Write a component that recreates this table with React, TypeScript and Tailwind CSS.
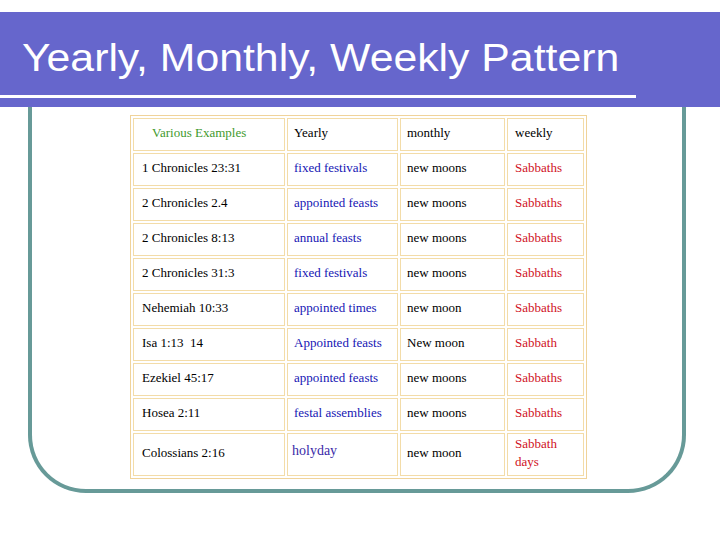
import React from "react";

type Row = { a: string; b: string; c: string; d: React.ReactNode };

const rows: Row[] = [
  { a: "1 Chronicles 23:31", b: "fixed festivals", c: "new moons", d: "Sabbaths" },
  { a: "2 Chronicles 2.4", b: "appointed feasts", c: "new moons", d: "Sabbaths" },
  { a: "2 Chronicles 8:13", b: "annual feasts", c: "new moons", d: "Sabbaths" },
  { a: "2 Chronicles 31:3", b: "fixed festivals", c: "new moons", d: "Sabbaths" },
  { a: "Nehemiah 10:33", b: "appointed times", c: "new moon", d: "Sabbaths" },
  { a: "Isa 1:13\u00a0 14", b: "Appointed feasts", c: "New moon", d: "Sabbath" },
  { a: "Ezekiel 45:17", b: "appointed feasts", c: "new moons", d: "Sabbaths" },
  { a: "Hosea 2:11", b: "festal assemblies", c: "new moons", d: "Sabbaths" },
];

const cell = "bg-white border border-[#f3dca8] flex items-center pb-[3px]";

export default function App() {
  return (
    <div className="w-[720px] h-[540px] bg-white overflow-hidden relative" style={{ fontFamily: '"Liberation Serif", serif' }}>
      <div className="mt-[12px] h-[95px] bg-[#6666cc] flex flex-col">
        <div className="h-[83px] pl-[22px] pt-[27px]">
          <div
            className="text-white text-[38px] leading-[38px] origin-left scale-x-[1.125] whitespace-nowrap"
            style={{ fontFamily: '"Liberation Sans", Arial, sans-serif' }}
          >
            Yearly, Monthly, Weekly Pattern
          </div>
        </div>
        <div className="w-[636px] h-[3px] bg-white" />
      </div>
      <div className="ml-[28px] w-[658px] h-[386px] border-4 border-t-0 border-[#679a98] rounded-b-[58px] pl-[98px] pt-[8px]">
        <div className="w-[457px] border border-[#f0d39a] p-[2px] grid grid-cols-[152px_111px_105px_77px] gap-[2px] text-[13px] leading-[18px] text-black">
          <div className={`${cell} h-[33px] pl-[18px] text-[#3f9a2e]`}>Various Examples</div>
          <div className={`${cell} h-[33px] pl-[6px]`}>Yearly</div>
          <div className={`${cell} h-[33px] pl-[6px]`}>monthly</div>
          <div className={`${cell} h-[33px] pl-[7px]`}>weekly</div>
          {rows.map((r, i) => (
            <React.Fragment key={i}>
              <div className={`${cell} h-[33px] pl-[8px]`}>{r.a}</div>
              <div className={`${cell} h-[33px] pl-[6px] text-[#1616b4]`}>{r.b}</div>
              <div className={`${cell} h-[33px] pl-[6px]`}>{r.c}</div>
              <div className={`${cell} h-[33px] pl-[7px] text-[#d0121e]`}>{r.d}</div>
            </React.Fragment>
          ))}
          <div className={`${cell} h-[43px] pl-[8px]`}>Colossians 2:16</div>
          <div className={`${cell} h-[43px] pl-[4px] !pb-[7px] text-[#3a2aa8] text-[14px]`}>holyday</div>
          <div className={`${cell} h-[43px] pl-[6px]`}>new moon</div>
          <div className={`${cell} h-[43px] pl-[7px] text-[#d0121e]`}>
            <span>
              Sabbath
              <br />
              days
            </span>
          </div>
        </div>
      </div>
    </div>
  );
}
